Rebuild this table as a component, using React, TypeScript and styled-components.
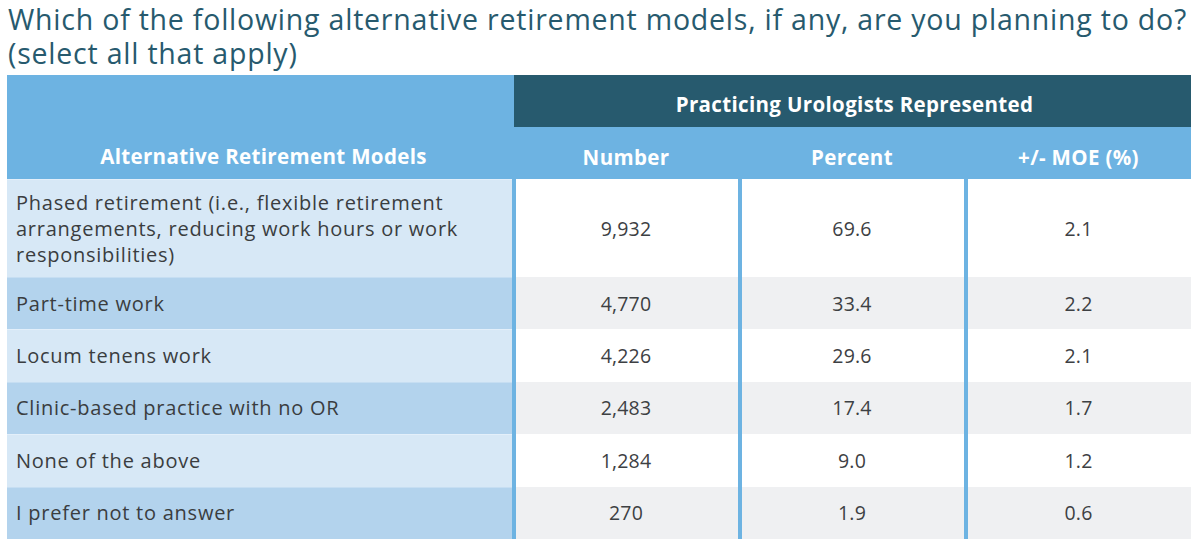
import React from "react";
import styled, { createGlobalStyle } from "styled-components";

const Global = createGlobalStyle`
  html, body { margin: 0; padding: 0; background: #ffffff; }
  body { font-family: "Open Sans", "Noto Sans", sans-serif; }
`;

const Page = styled.div`
  width: 1200px;
  height: 542px;
  overflow: hidden;
  padding: 0 0 0 7px;
  box-sizing: border-box;
`;

const Title = styled.h1`
  margin: 0;
  padding: 2px 0 0 1px;
  height: 75px;
  box-sizing: border-box;
  font-size: 28.5px;
  line-height: 34px;
  font-weight: 400;
  color: #275a6e;
  letter-spacing: 0.78px;
`;

const TitleLine = styled.span`
  display: block;
  white-space: nowrap;
`;

const Table = styled.div`
  display: grid;
  width: 1184px;
  grid-template-columns: 505px 226px 226px 227px;
  grid-template-rows: 52px 52px 98px repeat(5, 52.4px);
`;

const HeadText = styled.div`
  color: #ffffff;
  font-weight: 700;
  font-size: 20.5px;
  letter-spacing: 0.35px;
`;

const CornerHead = styled(HeadText)`
  grid-row: 1 / span 2;
  grid-column: 1;
  background: #6db3e2;
  display: flex;
  align-items: flex-end;
  justify-content: center;
  padding: 0 0 9px 8px;
`;

const GroupHead = styled.div`
  grid-row: 1;
  grid-column: 2 / span 3;
  background: #6db3e2;
  padding-left: 2px;
  display: flex;
`;

const GroupBand = styled(HeadText)`
  flex: 1;
  background: #275a6e;
  display: flex;
  align-items: center;
  justify-content: center;
  padding: 6px 0 0 4px;
`;

const ColHead = styled(HeadText)`
  grid-row: 2;
  background: #6db3e2;
  display: flex;
  align-items: center;
  justify-content: center;
  padding: 8px 0 0 2px;
`;

const LabelCell = styled.div<{ $alt: boolean }>`
  background: ${(p) => (p.$alt ? "#b3d3ed" : "#d7e8f6")};
  border-top: 1px solid ${(p) => (p.$alt ? "#c6def2" : "#e3effa")};
  color: #3a3d40;
  font-size: 20px;
  letter-spacing: 0.75px;
  line-height: 26px;
  padding: 0 20px 0 9px;
  display: flex;
  align-items: center;
  box-sizing: border-box;
`;

const ValueCell = styled.div<{ $alt: boolean }>`
  background: ${(p) => (p.$alt ? "#eff0f2" : "#ffffff")};
  border-left: 4px solid #6db3e2;
  color: #3d4043;
  font-size: 19.5px;
  letter-spacing: 0.2px;
  display: flex;
  align-items: center;
  justify-content: center;
  box-sizing: border-box;
  padding-right: 2px;
`;

const rows: [string, string, string, string][] = [
  [
    "Phased retirement (i.e., flexible retirement arrangements, reducing work hours or work responsibilities)",
    "9,932",
    "69.6",
    "2.1",
  ],
  ["Part-time work", "4,770", "33.4", "2.2"],
  ["Locum tenens work", "4,226", "29.6", "2.1"],
  ["Clinic-based practice with no OR", "2,483", "17.4", "1.7"],
  ["None of the above", "1,284", "9.0", "1.2"],
  ["I prefer not to answer", "270", "1.9", "0.6"],
];

export default function App() {
  return (
    <Page>
      <Global />
      <Title>
        <TitleLine>
          Which of the following alternative retirement models, if any, are you planning to do?
        </TitleLine>
        <TitleLine>(select all that apply)</TitleLine>
      </Title>
      <Table>
        <CornerHead>Alternative Retirement Models</CornerHead>
        <GroupHead>
          <GroupBand>Practicing Urologists Represented</GroupBand>
        </GroupHead>
        <ColHead>Number</ColHead>
        <ColHead>Percent</ColHead>
        <ColHead>+/- MOE (%)</ColHead>
        {rows.map((r, i) => (
          <React.Fragment key={i}>
            <LabelCell $alt={i % 2 === 1}>{r[0]}</LabelCell>
            <ValueCell $alt={i % 2 === 1}>{r[1]}</ValueCell>
            <ValueCell $alt={i % 2 === 1}>{r[2]}</ValueCell>
            <ValueCell $alt={i % 2 === 1}>{r[3]}</ValueCell>
          </React.Fragment>
        ))}
      </Table>
    </Page>
  );
}
